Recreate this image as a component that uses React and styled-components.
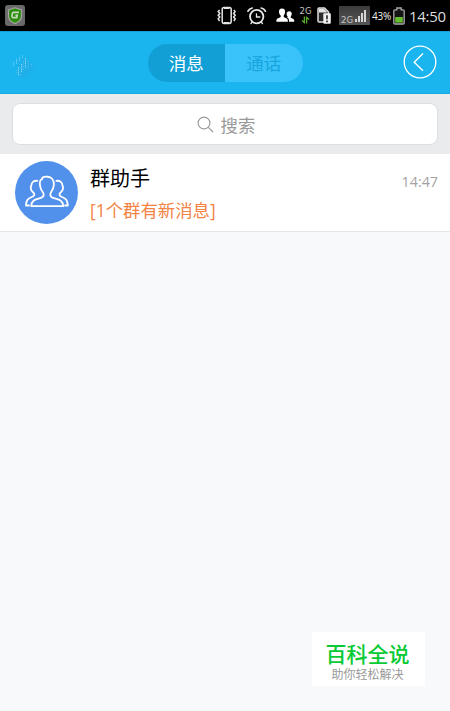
import styled, { createGlobalStyle } from 'styled-components'


const ShieldIcon = () => (
    <svg width="20" height="21" viewBox="0 0 20 21">
        <rect width="20" height="21" rx="3" fill="#6b686b" />
        <path d="M10 2.8 L16.5 5 V11 C16.5 14.5 14 17 10 18.6 C6 17 3.5 14.5 3.5 11 V5 Z" fill="#2c8c0c" stroke="#a3a5a1" strokeWidth="1.2" />
        <path d="M14 7.4 H8.7 Q7.5 7.4 7.3 8.8 L7 11 Q6.9 12.6 8.4 12.6 H11.8 L12.2 10.4 H10.4" fill="none" stroke="#c3d8bb" strokeWidth="1.7" />
    </svg>
)

const VibrateIcon = () => (
    <svg width="19" height="19" viewBox="0 0 19 19" fill="none" stroke="#e6e6e6">
        <rect x="5.2" y="1.6" width="9" height="15.8" rx="1.8" strokeWidth="1.5" />
        <path d="M7 2 H12.4 M7 17 H12.4" strokeWidth="2" />
        <path d="M2.6 4 L1.2 5.6 L2.8 7.4 L1.2 9.2 L2.8 11 L1.2 12.8 L2.6 15" strokeWidth="1.5" />
        <path d="M16.8 4 L18.2 5.6 L16.6 7.4 L18.2 9.2 L16.6 11 L18.2 12.8 L16.8 15" strokeWidth="1.5" />
    </svg>
)

const AlarmIcon = () => (
    <svg width="20" height="18" viewBox="0 0 20 18" fill="none" stroke="#e8e8e8" strokeLinecap="round">
        <circle cx="9.7" cy="9.6" r="6.7" strokeWidth="1.8" />
        <path d="M1 4.2 Q2.2 1.5 5.2 1 M18.4 4.2 Q17.2 1.5 14.2 1" strokeWidth="1.7" />
        <path d="M9.5 6.8 V10 H12.8" strokeWidth="1.3" />
        <path d="M5 15 L4 16.6 M14.4 15 L15.4 16.6" strokeWidth="1.4" />
    </svg>
)

const ContactsIcon = () => (
    <svg width="19" height="15" viewBox="0 0 19 15" fill="#fff">
        <path d="M6 0.6 C8.4 .6 9.3 2.3 9 4.3 C8.8 6 8.2 7 7.7 7.6 V9 C9.5 10 11.6 10.3 11.8 12 V13.7 H.4 V12 C.7 10.3 3 10 4.7 9 V7.6 C4 7 3.2 6 3 4.3 C2.8 2.3 3.7 .6 6 .6 Z" />
        <path d="M13.2 3.2 C15.2 3.2 16 4.5 15.7 6.3 C15.5 7.5 15.1 8.3 14.7 8.8 V9.8 C16.3 10.6 18 10.8 18.2 12.2 V13.7 H13 V12.2 C13 10.8 12 10 11 9.5 L11.8 8.8 C11.2 8.2 10.7 7.4 10.6 6.3 C10.5 4.5 11.2 3.2 13.2 3.2 Z" />
    </svg>
)

const DataArrows = () => (
    <svg width="9" height="8" viewBox="0 0 9 8" fill="none" stroke="#5aa92b" strokeWidth="1.3">
        <path d="M3.4 .5 V6.5 L1 4.4 M5.6 7.5 V1.5 L8 3.6" />
    </svg>
)

const SimIcon = () => (
    <svg width="14" height="17" viewBox="0 0 14 17">
        <path d="M1 2 Q1 1 2 1 H7.5 L11.5 5 V15 H2 Q1 15 1 14 Z" fill="#2b2b2b" stroke="#dedede" strokeWidth="1.5" />
        <path d="M1.8 1.8 H7 L10.5 5.5 H1.8 Z" fill="#e4e4e4" />
        <rect x="6.3" y="6.3" width="7.5" height="10.5" rx="1" fill="#f0f0f0" />
        <path d="M10 8.3 V12.2 M10 13.5 V15.2" stroke="#333" strokeWidth="1.7" />
    </svg>
)

const SignalBars = () => (
    <svg width="15" height="15" viewBox="0 0 15 15" fill="#d6d6d6">
        <rect x="2" y="10" width="2" height="3" />
        <rect x="5" y="7" width="2" height="6" />
        <rect x="8" y="4" width="2" height="9" />
        <rect x="11" y="1" width="2" height="12" />
    </svg>
)

const BatteryIcon = () => (
    <svg width="12" height="18" viewBox="0 0 12 18">
        <path d="M3.8 2.8 V1 H8.2 V2.8 H10.2 Q11.2 2.8 11.2 3.8 V16 Q11.2 17 10.2 17 H1.8 Q.8 17 .8 16 V3.8 Q.8 2.8 1.8 2.8 Z" fill="#151515" stroke="#a9a9a9" strokeWidth="1.3" />
        <rect x="2.2" y="10" width="7.6" height="5.6" fill="#63bd2c" />
    </svg>
)

const PixelMark = () => (
    <svg width="24" height="26" viewBox="0 0 24 26" fill="none" stroke="#8ed9f5" strokeWidth="1">
        <path d="M11 2 L23 13 L11 25 L4 17 Z" fill="#20afe9" stroke="none" />
        <path d="M1.5 8 V12 M4.5 4.5 V10 M7.5 3 V7 M10.5 1 V4" opacity=".5" />
        <path d="M6.5 13 V22 M9.5 10 V19 M13.5 4 V14" strokeDasharray="1.3 1" />
        <path d="M11.5 7 V17 M16.5 7 V15 M19.5 10 V13" strokeDasharray="1 1.6" opacity=".5" />
        <path d="M4.5 16 V20 M8.5 20 V23" strokeDasharray="1 1.5" opacity=".4" />
    </svg>
)

const BackIcon = () => (
    <svg width="34" height="34" viewBox="0 0 34 34" fill="none" stroke="#fff">
        <circle cx="17" cy="17" r="15.8" strokeWidth="1.3" />
        <path d="M20 8.5 L11.2 17.2 L20 25.8" strokeWidth="1.4" />
    </svg>
)

const SearchIcon = () => (
    <svg width="17" height="17" viewBox="0 0 17 17" fill="none" stroke="#9b9b9b" strokeWidth="1.2">
        <circle cx="7" cy="7" r="5.9" />
        <path d="M11.3 11.3 L16 16" />
    </svg>
)

const GroupIcon = () => (
    <svg width="63" height="63" viewBox="0 0 63 63" fill="none" stroke="#fff" strokeWidth="1.8" strokeLinejoin="round" strokeLinecap="round">
        <path d="M22.3 19.8 C18.6 19.4 16.4 21.6 16.3 24.6 C15.2 26 15.6 29.3 18 31.3 C20.4 33.3 19.4 35 16.8 36 C12.8 37.6 11.2 39 11 44.5 H14" />
        <path d="M41.4 19.8 C45.2 19.4 47.4 21.6 47.5 24.6 C48.6 26 48.2 29.3 45.8 31.3 C43.4 33.3 44.4 35 47 36 C51 37.6 52.5 39 52.8 44.5 H50" />
        <path d="M27.2 16.8 C30 15.2 35 15.2 37.3 18 C38.9 20 39.2 22 38.8 24.4 C38.5 27.5 37.4 29.4 36.2 31 C34.7 33.2 35 35.5 37.5 36.7 C42 38.5 48 38 48.2 45.2 H16.2 C16.4 38 22.2 38.5 26.4 36.7 C29 35.5 29.3 33.2 27.7 31 C26.4 29.4 25.3 27.5 25 24.4 C24.6 21.5 25 18.6 27.2 18.2 Z" />
    </svg>
)

const App = () => {
    return (
        <Screen>
            <GlobalStyle />
            <StatusBar>
                <ShieldIcon />
                <StatusIcons>
                    <VibrateIcon />
                    <Slot $left={11}><AlarmIcon /></Slot>
                    <Slot $left={9}><ContactsIcon /></Slot>
                    <DataSlot>
                        <NetworkLabel>2G</NetworkLabel>
                        <DataArrows />
                    </DataSlot>
                    <Slot $left={5}><SimIcon /></Slot>
                    <SignalBox>
                        <NetworkLabel>2G</NetworkLabel>
                        <SignalBars />
                    </SignalBox>
                    <Percent>43%</Percent>
                    <BatteryIcon />
                    <Clock>14:50</Clock>
                </StatusIcons>
            </StatusBar>
            <Header>
                <PixelMark />
                <Tabs>
                    <Tab $active>消息</Tab>
                    <Tab>通话</Tab>
                </Tabs>
                <BackButton aria-label="返回">
                    <BackIcon />
                </BackButton>
            </Header>
            <SearchArea>
                <SearchBox>
                    <SearchIcon />
                    <SearchText>搜索</SearchText>
                </SearchBox>
            </SearchArea>
            <MessageRow>
                <Avatar>
                    <GroupIcon />
                </Avatar>
                <MessageBody>
                    <MessageTitle>群助手</MessageTitle>
                    <MessageText>[1个群有新消息]</MessageText>
                </MessageBody>
                <MessageTime>14:47</MessageTime>
            </MessageRow>
            <Watermark>
                <WatermarkTitle>百科全说</WatermarkTitle>
                <WatermarkText>助你轻松解决</WatermarkText>
            </Watermark>
        </Screen>
    )
}

const GlobalStyle = createGlobalStyle`
    * {
        box-sizing: border-box;
    }

    body {
        margin: 0;
        font-family: "Open Sans", "Noto Sans CJK SC", sans-serif;
    }

    svg {
        display: block;
        flex-shrink: 0;
    }
`

const Screen = styled.div`
    display: flex;
    flex-direction: column;
    width: 450px;
    height: 711px;
    background-color: #f7f9fb;
    overflow: hidden;
`

const StatusBar = styled.div`
    display: flex;
    align-items: center;
    justify-content: space-between;
    height: 31px;
    flex-shrink: 0;
    padding: 0 4px 0 5px;
    background-color: #000;
`

const StatusIcons = styled.div`
    display: flex;
    align-items: center;
    width: 229px;
`

const Slot = styled.div`
    margin-left: ${(props) => props.$left}px;
`

const DataSlot = styled.div`
    display: flex;
    flex-direction: column;
    align-items: center;
    gap: 1px;
    width: 13px;
    margin-left: 4px;
`

const NetworkLabel = styled.span`
    color: #c4c4c4;
    font-family: "DejaVu Sans", sans-serif;
    font-size: 8.5px;
    line-height: 8px;
`

const SignalBox = styled.div`
    display: flex;
    align-items: flex-end;
    width: 31px;
    height: 19px;
    margin-left: 8px;
    padding: 0 1px 1px 2px;
    background: linear-gradient(#3b3b3b, #565656);
`

const Percent = styled.span`
    width: 21px;
    margin: 0 0 0 2px;
    color: #f1f1f1;
    font-size: 10px;
    letter-spacing: -0.2px;
    white-space: nowrap;
`

const Clock = styled.span`
    margin-left: 4px;
    color: #ddd;
    font-size: 15px;
    line-height: 20px;
    letter-spacing: -0.3px;
`

const Header = styled.header`
    display: flex;
    align-items: center;
    justify-content: space-between;
    height: 63px;
    flex-shrink: 0;
    padding: 0 13px 0 12px;
    background-color: #1ab4ee;
    border-top: 1px solid #14a0d6;
    border-bottom: 1px solid #17abe3;

    > svg {
        margin-top: 8px;
    }
`

const Tabs = styled.div`
    display: flex;
    width: 155px;
    height: 38px;
    margin-left: 11px;
    border-radius: 19px;
    overflow: hidden;
`

const Tab = styled.button`
    flex: 1;
    padding: 0 0 1px;
    border: none;
    background-color: ${(props) => (props.$active ? '#129fd6' : '#3ac3fa')};
    color: ${(props) => (props.$active ? '#fff' : '#18a4dc')};
    font-family: inherit;
    font-size: 17.5px;
`

const BackButton = styled.button`
    margin-bottom: 1px;
    padding: 0;
    border: none;
    background: none;
`

const SearchArea = styled.div`
    height: 60px;
    flex-shrink: 0;
    padding: 9px 12px;
    background-color: #e9ebed;
`

const SearchBox = styled.div`
    display: flex;
    align-items: center;
    justify-content: center;
    gap: 7px;
    height: 42px;
    padding-left: 2px;
    border: 1px solid #dcdfe1;
    border-radius: 8px;
    background-color: #fff;
`

const SearchText = styled.span`
    color: #999;
    font-size: 17.4px;
`

const MessageRow = styled.div`
    display: flex;
    height: 78px;
    flex-shrink: 0;
    padding: 7px 12px 0 15px;
    background-color: #fff;
    border-bottom: 1px solid #e4e6e9;
`

const Avatar = styled.div`
    width: 63px;
    height: 63px;
    border-radius: 50%;
    background-color: #5291eb;
`

const MessageBody = styled.div`
    display: flex;
    flex: 1;
    flex-direction: column;
    margin-left: 12px;
    padding-top: 1px;
`

const MessageTitle = styled.span`
    color: #000;
    font-size: 20px;
    line-height: 34px;
`

const MessageText = styled.span`
    color: #f28343;
    font-size: 17.4px;
    line-height: 28px;
`

const MessageTime = styled.span`
    color: #a3a3a3;
    font-size: 14.3px;
    line-height: 42px;
`

const Watermark = styled.div`
    display: flex;
    flex-direction: column;
    align-items: center;
    align-self: flex-end;
    width: 113px;
    height: 54px;
    margin: auto 25px 25px 0;
    padding: 7px 2px 0 0;
    background-color: #fff;
`

const WatermarkTitle = styled.span`
    color: #08ca35;
    font-size: 21px;
    font-weight: 500;
    line-height: 30px;
`

const WatermarkText = styled.span`
    color: #999;
    font-size: 12px;
    line-height: 11px;
`

export default App
